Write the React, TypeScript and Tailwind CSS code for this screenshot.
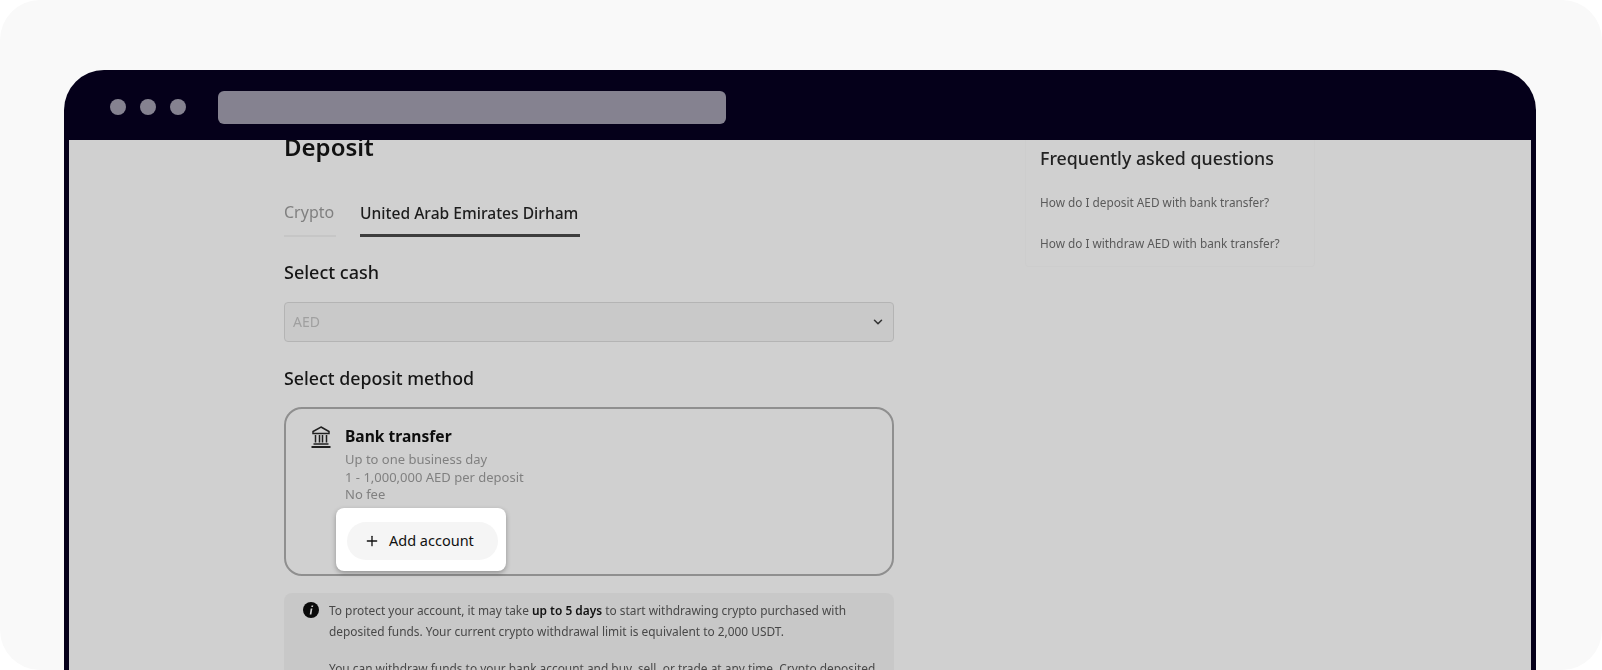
import React from 'react'
import { ChevronDown, Plus } from 'lucide-react'

const soft = 'blur-[0.7px]'

function BankIcon() {
  return (
    <svg width="20" height="22" viewBox="0 0 20 22" fill="none" stroke="#1f1f1f" strokeWidth="1.5" className={soft}>
      <path d="M10 1 L18 5.5 V7.5 H2 V5.5 Z" />
      <path d="M4.5 9 V16.5 M8.5 9 V16.5 M11.5 9 V16.5 M15.5 9 V16.5" />
      <path d="M2.5 18 H17.5" />
      <path d="M0.5 21 H19.5" strokeWidth="2" />
    </svg>
  )
}

function InfoIcon() {
  return (
    <svg width="16" height="16" viewBox="0 0 16 16" className={`mt-[2px] shrink-0 ${soft}`}>
      <circle cx="8" cy="8" r="8" fill="#0a0a0a" />
      <path d="M8.6 3.4 h1.7 l-.35 1.7 h-1.7 Z M7.7 6.6 h1.7 l-1 5.9 h-1.7 Z" fill="#d0d0d0" />
    </svg>
  )
}

export default function App() {
  return (
    <div className="h-[670px] overflow-hidden bg-white" style={{ fontFamily: '"Noto Sans", "Liberation Sans", sans-serif' }}>
      <div className="h-[670px] overflow-hidden rounded-[40px] bg-[#f9f9f9] pt-[70px] pr-[66px] pl-[64px]">
        <div className="h-[640px] overflow-hidden rounded-t-[40px] bg-[#05001a] px-[5px]">
          {/* Browser bar */}
          <div className="flex h-[70px] items-center pl-[41px]">
            <div className="mt-[3px] flex gap-[14px]">
              <div className="h-4 w-4 rounded-full bg-[#858290]" />
              <div className="h-4 w-4 rounded-full bg-[#858290]" />
              <div className="h-4 w-4 rounded-full bg-[#858290]" />
            </div>
            <div className="mt-[5px] ml-[32px] h-[33px] w-[508px] rounded-[6px] bg-[#858290]" />
          </div>

          {/* Dimmed page */}
          <div className="flex h-[570px] overflow-hidden bg-[#d0d0d0] pl-[215px]">
            <div className="w-[610px] shrink-0">
              <h1 className={`-mt-[8px] text-[24px] leading-[30px] font-semibold text-[#111111] ${soft}`}>Deposit</h1>

              <div className="mt-[38px] flex gap-[24px]">
                <div className={`w-[52px] border-b-[2px] border-[#c6c6c6] pb-[11px] text-[16px] leading-[24px] text-[#808080] ${soft}`}>Crypto</div>
                <div className={`w-[220px] border-b-[3px] border-[#3d3d3d] pt-[1px] pb-[9px] text-[15.6px] leading-[24px] font-medium whitespace-nowrap text-[#1c1c1c] ${soft}`}>
                  United Arab Emirates Dirham
                </div>
              </div>

              <div className={`mt-[22px] text-[18px] leading-[26px] font-medium text-[#161616] ${soft}`}>Select cash</div>

              <div className={`mt-[17px] flex h-[40px] items-center justify-between rounded-[4px] border border-[#b4b4b4] bg-[#c9c9c9] pr-[8px] pb-[1px] pl-[8px] ${soft}`}>
                <span className="text-[14px] text-[#a0a0a0]">AED</span>
                <ChevronDown size={14} strokeWidth={2.6} color="#333333" />
              </div>

              <div className={`mt-[23px] text-[17.8px] leading-[26px] font-medium text-[#161616] ${soft}`}>Select deposit method</div>

              <div className="mt-[16px] flex h-[169px] gap-[14px] rounded-[18px] border-[2px] border-[#8f8f8f] pt-[17px] pl-[25px]">
                <BankIcon />
                <div>
                  <div className={`text-[15.6px] leading-[21px] font-bold text-[#0d0d0d] ${soft}`}>Bank transfer</div>
                  <div className={`mt-[4px] text-[13px] leading-[17.5px] text-[#808080] ${soft}`}>
                    <div>Up to one business day</div>
                    <div>1 - 1,000,000 AED per deposit</div>
                    <div>No fee</div>
                  </div>
                  {/* Highlighted action, sits above the dim */}
                  <div className="mt-[4px] -ml-[9px] flex h-[63px] w-[170px] items-center rounded-[8px] bg-white pt-[4px] pl-[11px] shadow-[0_2px_5px_rgba(0,0,0,0.3)]">
                    <button className="flex h-[38px] w-[151px] items-center rounded-full bg-[#f5f5f5] pl-[17px] text-[14.5px] text-[#111111]">
                      <Plus size={16} strokeWidth={2} />
                      <span className="ml-[9px]">Add account</span>
                    </button>
                  </div>
                </div>
              </div>

              <div className={`mt-[17px] flex gap-[10px] rounded-[8px] bg-[#c8c8c8] pt-[7px] pr-[10px] pb-[16px] pl-[19px] text-[11.9px] leading-[20.5px] text-[#484848] ${soft}`}>
                <InfoIcon />
                <div>
                  <p>
                    To protect your account, it may take <b className="font-semibold text-[#111111]">up to 5 days</b> to start withdrawing crypto purchased with
                    <br />
                    deposited funds. Your current crypto withdrawal limit is equivalent to 2,000 USDT.
                  </p>
                  <p className="mt-[17px] whitespace-nowrap">
                    You can withdraw funds to your bank account and buy, sell, or trade at any time. Crypto deposited
                  </p>
                </div>
              </div>
            </div>

            {/* FAQ */}
            <div className="ml-[131px] h-[127px] w-[290px] rounded-b-[4px] border border-t-0 border-[#cdcdcd] pt-[5px] pl-[14px]">
              <div className={`text-[17.8px] leading-[26px] font-medium text-[#222222] ${soft}`}>Frequently asked questions</div>
              <div className={`mt-[22px] text-[11.8px] leading-[18px] text-[#5a5a5a] ${soft}`}>How do I deposit AED with bank transfer?</div>
              <div className={`mt-[23px] text-[11.8px] leading-[18px] text-[#5a5a5a] ${soft}`}>How do I withdraw AED with bank transfer?</div>
            </div>
          </div>
        </div>
      </div>
    </div>
  )
}
